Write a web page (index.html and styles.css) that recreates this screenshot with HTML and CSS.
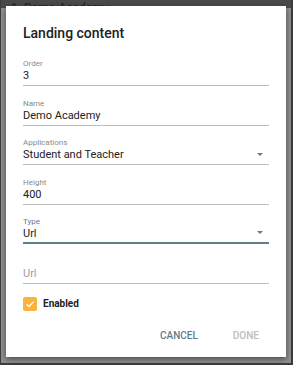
FILE: index.html
```html
<!DOCTYPE html>
<html lang="en">
<head>
    <meta charset="UTF-8">
    <meta name="viewport" content="width=device-width, initial-scale=1.0">
    <title>Landing content</title>
    <link rel="stylesheet" href="styles.css">
</head>
<body>
    <div class="backdrop">
        <div class="page-title">1. Demo Academy</div>
    </div>

    <div class="dialog">
        <h2 class="dialog-title">Landing content</h2>

        <div class="field">
            <label>Order</label>
            <div class="value">3</div>
        </div>
        <div class="field">
            <label>Name</label>
            <div class="value">Demo Academy</div>
        </div>
        <div class="field select">
            <label>Applications</label>
            <div class="value">Student and Teacher</div>
            <span class="arrow"></span>
        </div>
        <div class="field">
            <label>Height</label>
            <div class="value">400</div>
        </div>
        <div class="field select focused">
            <label>Type</label>
            <div class="value">Url</div>
            <span class="arrow"></span>
        </div>
        <div class="field">
            <label></label>
            <div class="value placeholder">Url</div>
        </div>

        <div class="checkbox-row">
            <span class="checkbox">
                <svg width="10" height="10" viewBox="0 0 10 10">
                    <path d="M1.5 5.2 L4 7.6 L8.6 2.6" fill="none" stroke="#fff" stroke-width="1.4"/>
                </svg>
            </span>
            <span class="checkbox-label">Enabled</span>
        </div>

        <div class="actions">
            <button class="btn primary">Cancel</button>
            <button class="btn disabled">Done</button>
        </div>
    </div>
</body>
</html>
```

FILE: styles.css
```css
body {
    margin: 0;
    width: 293px;
    height: 365px;
    overflow: hidden;
    font-family: Roboto, "Liberation Sans", sans-serif;
    background-color: #3c3c3c;
    position: relative;
}
.backdrop {
    position: absolute;
    top: 0;
    left: 1px;
    right: 2px;
    bottom: 2px;
    background: linear-gradient(#4a4a4a 0, #4a4a4a 8px, #8f8f8f 8px);
}
.page-title {
    padding: 1px 0 0 10px;
    font-size: 12px;
    line-height: 14px;
    color: #222;
}
.dialog {
    position: absolute;
    top: 6px;
    left: 6px;
    width: 280px;
    height: 351px;
    box-sizing: border-box;
    padding: 17px 17px 0 17px;
    background-color: #fff;
    box-shadow: 0 2px 6px rgba(0, 0, 0, 0.5);
}
.dialog-title {
    margin: 0 0 16px 0;
    font-size: 14px;
    line-height: 20px;
    font-weight: 500;
    color: #212121;
}
.field {
    position: relative;
    border-bottom: 1px solid #bdbdbd;
    padding-bottom: 2px;
    margin-bottom: 12.6px;
}
.field label {
    display: block;
    height: 10px;
    font-size: 8px;
    line-height: 10px;
    color: #8a8a8a;
}
.field .value {
    font-size: 11px;
    line-height: 14px;
    color: #212121;
}
.field .placeholder {
    color: #9e9e9e;
}
.field.focused {
    border-bottom: 2px solid #607d8b;
    padding-bottom: 1px;
}
.field.focused label {
    color: #607d8b;
}
.arrow {
    position: absolute;
    right: 6px;
    bottom: 8px;
    width: 0;
    height: 0;
    border-left: 3.5px solid transparent;
    border-right: 3.5px solid transparent;
    border-top: 3.5px solid #757575;
}
.field.focused .arrow {
    border-top-color: #607d8b;
}
.checkbox-row {
    display: flex;
    align-items: center;
}
.checkbox {
    width: 14px;
    height: 14px;
    border-radius: 2px;
    background-color: #fbb33a;
    display: flex;
    align-items: center;
    justify-content: center;
}
.checkbox-label {
    margin-left: 6px;
    font-size: 10px;
    font-weight: 700;
    color: #212121;
}
.actions {
    display: flex;
    justify-content: flex-end;
    margin-top: 18px;
    margin-right: 10px;
}
.btn {
    font-family: Roboto, "Liberation Sans", sans-serif;
    font-size: 10px;
    font-weight: 500;
    text-transform: uppercase;
    border: none;
    background: none;
    padding: 0;
    line-height: 14px;
}
.btn.primary {
    color: #607d8b;
    margin-right: 35px;
}
.btn.disabled {
    color: #bdbdbd;
}
```
